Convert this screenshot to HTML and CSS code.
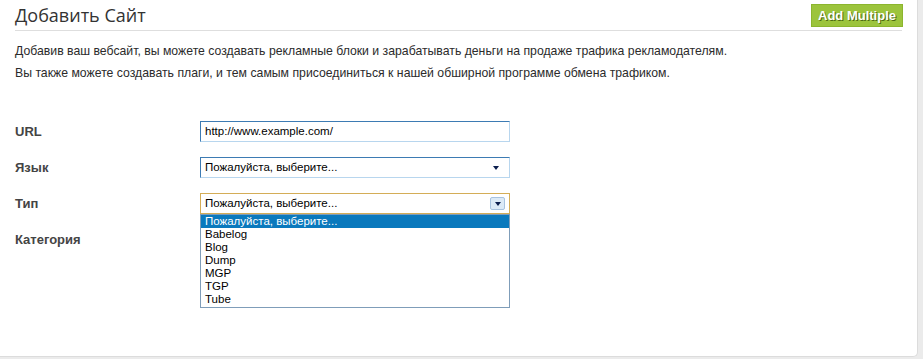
FILE: index.html
```html
<!DOCTYPE html>
<html lang="ru">
<head>
    <meta charset="utf-8" />
    <title>Добавить Сайт</title>
    <link rel="stylesheet" href="styles.css">
</head>
<body>
<div class="panel">
    <div class="panel-head">
        <h1>Добавить Сайт</h1>
        <a class="btn-green" href="#">Add Multiple</a>
    </div>

    <p class="intro">
        Добавив ваш вебсайт, вы можете создавать рекламные блоки и зарабатывать деньги на продаже трафика рекламодателям.
        <br />
        Вы также можете создавать плаги, и тем самым присоединиться к нашей обширной программе обмена трафиком.
    </p>

    <form class="site-form">
        <div class="row">
            <label>URL</label>
            <div class="field">http://www.example.com/</div>
        </div>
        <div class="row">
            <label>Язык</label>
            <div class="field select">
                <span>Пожалуйста, выберите...</span>
                <span class="arrow"></span>
            </div>
        </div>
        <div class="row">
            <label>Тип</label>
            <div class="field select focus">
                <span>Пожалуйста, выберите...</span>
                <span class="arrow-btn"><span class="arrow"></span></span>
                <ul class="dropdown">
                    <li class="selected">Пожалуйста, выберите...</li>
                    <li>Babelog</li>
                    <li>Blog</li>
                    <li>Dump</li>
                    <li>MGP</li>
                    <li>TGP</li>
                    <li>Tube</li>
                </ul>
            </div>
        </div>
        <div class="row">
            <label>Категория</label>
        </div>
    </form>
</div>
</body>
</html>
```

FILE: styles.css
```css
html, body {
    margin: 0;
    background-color: #ebebeb;
}

body {
    font-family: "Liberation Sans", Arial, sans-serif;
    color: #333;
}

.panel {
    width: 918px;
    height: 357px;
    background: #fff;
    border-right: 1px solid #dcdcdc;
    border-bottom: 1px solid #dcdcdc;
    border-bottom-right-radius: 5px;
    box-sizing: border-box;
    padding: 0 15px 0 15px;
}

.panel-head {
    display: flex;
    justify-content: space-between;
    align-items: flex-start;
    height: 30px;
    border-bottom: 1px solid #dedede;
}

.panel-head h1 {
    margin: 4px 0 0;
    font-family: "Open Sans", sans-serif;
    font-weight: normal;
    font-size: 18px;
    line-height: 22px;
    color: #333;
}

.btn-green {
    margin-top: 4px;
    margin-right: -1px;
    display: block;
    height: 21px;
    line-height: 21px;
    padding: 0 6px;
    background: #9cc43c;
    border: 1px solid #8cb52e;
    color: #fff;
    font-weight: bold;
    font-size: 13px;
    text-decoration: none;
    text-shadow: 1px 1px 0 #4d6a12;
}

.intro {
    margin: 9px 0 0;
    font-size: 12.25px;
    line-height: 22px;
    color: #2b2b2b;
}

.site-form {
    margin-top: 37px;
}

.row {
    display: flex;
    align-items: flex-start;
    margin-bottom: 15px;
}

.row label {
    width: 185px;
    flex: none;
    font-weight: bold;
    font-size: 13px;
    color: #444;
    padding-top: 3px;
}

.field {
    position: relative;
    width: 310px;
    height: 21px;
    box-sizing: border-box;
    border: 1px solid #b8d6ee;
    border-top-color: #3d7bb3;
    border-left-color: #3d7bb3;
    font-size: 11.5px;
    line-height: 19px;
    padding: 0 4px;
    color: #000;
}

.select {
    display: flex;
    justify-content: space-between;
    align-items: center;
}

.arrow {
    display: block;
    width: 0;
    height: 0;
    border-left: 3.5px solid transparent;
    border-right: 3.5px solid transparent;
    border-top: 4px solid #0b1e4e;
    margin-right: 6px;
}

.select.focus {
    border: 1px solid #d4ad57;
}

.arrow-btn {
    display: flex;
    align-items: center;
    justify-content: center;
    width: 13px;
    height: 11px;
    border: 1px solid #a8c3e0;
    border-radius: 2px;
    background: #dceaf7;
    margin-right: 0;
}

.arrow-btn .arrow {
    margin: 0;
}

.dropdown {
    position: absolute;
    left: -1px;
    top: 20px;
    width: 310px;
    box-sizing: border-box;
    margin: 0;
    padding: 0 0 1px;
    list-style: none;
    background: #fff;
    border: 1px solid #7f9db9;
    font-size: 11.5px;
    line-height: 13px;
}

.dropdown li {
    padding: 0 4px;
    height: 13px;
}

.dropdown li.selected {
    background: #0a79bd;
    color: #fff;
}
```
